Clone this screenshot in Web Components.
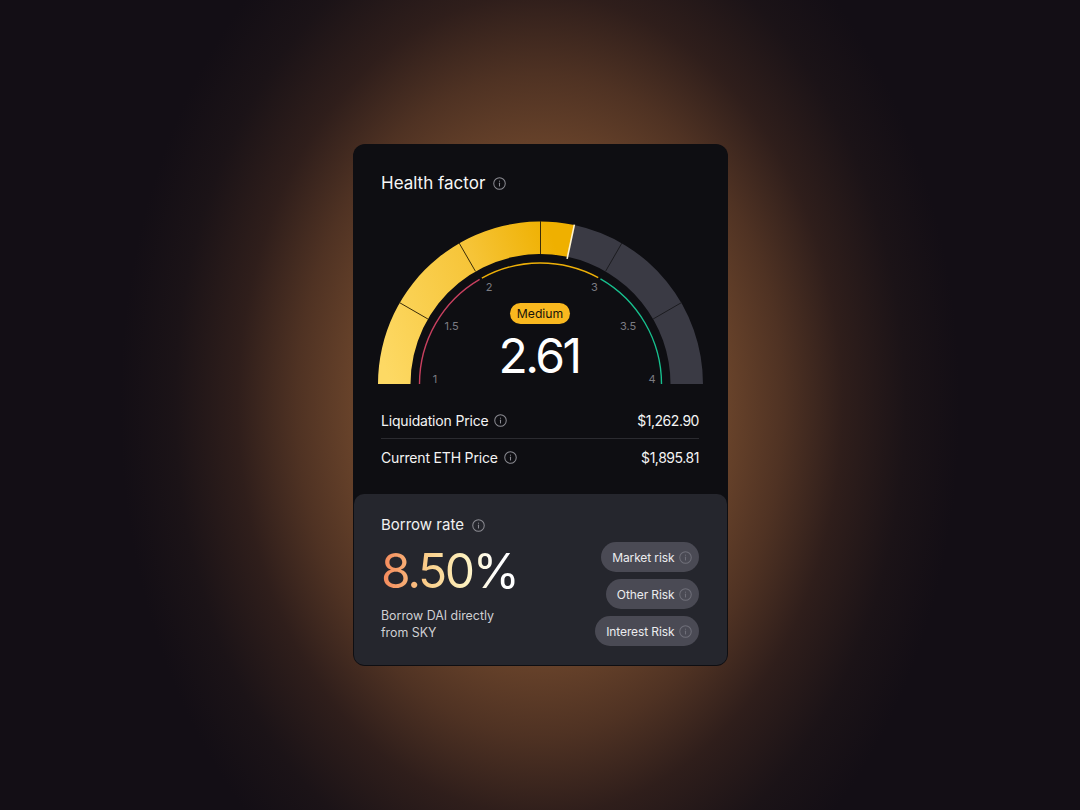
<!doctype html>
<html lang="en">
<head>
<meta charset="utf-8">
<title>Health factor</title>
<style>
  html, body { margin: 0; height: 100%; }
  body {
    display: flex; align-items: center; justify-content: center;
    height: 810px; overflow: hidden;
    background:
      radial-gradient(ellipse 420px 570px at 540px 405px, #74492b 0%, #67422a 45%, #4f3223 58%, #2f1e1b 72%, #1b1317 87%, #130e15 100%),
      #130e15;
    font-family: Inter, "Liberation Sans", sans-serif;
    color: #fff;
  }
</style>
</head>
<body>
<hf-card>
  <hf-gauge slot="gauge" value="2.61" level="Medium"></hf-gauge>
  <hf-row slot="rows" label="Liquidation Price" value="$1,262.90"></hf-row>
  <hf-row slot="rows" label="Current ETH Price" value="$1,895.81"></hf-row>
  <hf-borrow slot="borrow" rate="8.50%">
    Borrow DAI directly<br>from SKY
    <hf-chip slot="chips">Market risk</hf-chip>
    <hf-chip slot="chips">Other Risk</hf-chip>
    <hf-chip slot="chips">Interest Risk</hf-chip>
  </hf-borrow>
</hf-card>
<script>
class HfInfo extends HTMLElement {
  constructor() {
    super();
    this.attachShadow({ mode: "open" }).innerHTML = `
      <style>
        :host { display: inline-flex; width: 13px; height: 13px; color: #8b8b92; flex: none; }
        svg { width: 100%; height: 100%; display: block; }
      </style>
      <svg viewBox="0 0 14 14" fill="none" stroke="currentColor" stroke-width="1.1" stroke-linecap="round">
        <circle cx="7" cy="7" r="6.2"/>
        <path d="M7 6.6v3"/>
        <path d="M7 4.4v.1"/>
      </svg>`;
  }
}

class HfCard extends HTMLElement {
  constructor() {
    super();
    this.attachShadow({ mode: "open" }).innerHTML = `
      <style>
        :host { display: block; width: 375px; height: 522px; background: #0e0e12; border-radius: 12px; overflow: hidden; }
        .top { padding: 29px 28px 0 28.5px; height: 350px; box-sizing: border-box; }
        h2 { margin: 0; display: flex; align-items: center; gap: 8px; font-size: 17px; font-weight: 400; line-height: 20px; color: #f6f6f6; }
        .gauge { margin: 28px 0 0 -3.5px; }
        .rows { margin-top: 11px; }
        .rows ::slotted(hf-row:first-of-type) { border-bottom: 1px solid #2b2b30; }
      </style>
      <div class="top">
        <h2>Health factor <hf-info></hf-info></h2>
        <div class="gauge"><slot name="gauge"></slot></div>
        <div class="rows"><slot name="rows"></slot></div>
      </div>
      <slot name="borrow"></slot>`;
  }
}

class HfGauge extends HTMLElement {
  arc(r0, r1, a0, a1) {
    // angles in degrees, 180 = left end, 0 = right end
    const p = (r, a) => {
      const t = a * Math.PI / 180;
      return (this.cx + r * Math.cos(t)).toFixed(2) + " " + (this.cy - r * Math.sin(t)).toFixed(2);
    };
    return `M${p(r1, a0)}A${r1} ${r1} 0 0 1 ${p(r1, a1)}L${p(r0, a1)}A${r0} ${r0} 0 0 0 ${p(r0, a0)}Z`;
  }
  line(r, a0, a1) {
    const p = (a) => {
      const t = a * Math.PI / 180;
      return (this.cx + r * Math.cos(t)).toFixed(2) + " " + (this.cy - r * Math.sin(t)).toFixed(2);
    };
    return `M${p(a0)}A${r} ${r} 0 0 1 ${p(a1)}`;
  }
  connectedCallback() {
    this.cx = 162.5; this.cy = 163;
    const end = 78;
    const tick = (a) => {
      const t = a * Math.PI / 180;
      const c = Math.cos(t), s = Math.sin(t);
      return `<line x1="${this.cx + 130 * c}" y1="${this.cy - 130 * s}" x2="${this.cx + 163 * c}" y2="${this.cy - 163 * s}"/>`;
    };
    const t = end * Math.PI / 180;
    const labels = [["1", 57, 162], ["1.5", 73.5, 109], ["2", 111, 70], ["3", 216.5, 70], ["3.5", 250, 109], ["4", 274, 162]]
      .map(([s, x, y]) => `<text x="${x}" y="${y}" text-anchor="middle">${s}</text>`).join("");
    this.attachShadow({ mode: "open" }).innerHTML = `
      <style>
        :host { display: block; position: relative; width: 325px; height: 170px; }
        svg { display: block; }
        text { font: 400 11px Inter, "Liberation Sans", sans-serif; fill: #7c7c82; }
        .mid { position: absolute; left: 0; right: 0; top: 82px; display: flex; flex-direction: column; align-items: center; }
        .level { background: #f9b81f; color: #17130a; border-radius: 11px; font-size: 12.2px; line-height: 21px; padding: 0 7px; }
        .value { font-size: 48px; line-height: 50px; font-weight: 400; margin: 7px 0 0 -2px; color: #fff; letter-spacing: -2.5px; }
      </style>
      <svg width="325" height="170" viewBox="0 0 325 170">
        <defs>
          <linearGradient id="fill" gradientUnits="userSpaceOnUse" x1="0" y1="130" x2="190" y2="60">
            <stop offset="0" stop-color="#fdd964"/>
            <stop offset=".6" stop-color="#f6c437"/>
            <stop offset="1" stop-color="#efb000"/>
          </linearGradient>
        </defs>
        <path d="${this.arc(130, 162.5, end, 0)}" fill="#3a3a44"/>
        <path d="${this.arc(130, 162.5, 180, end)}" fill="url(#fill)"/>
        <g stroke="#3a2c08" stroke-width="1">${[150, 120, 90].map(tick).join("")}</g>
        <g stroke="#1c1c20" stroke-width="1">${[60, 30].map(tick).join("")}</g>
        <line x1="${this.cx + 128 * Math.cos(t)}" y1="${this.cy - 128 * Math.sin(t)}" x2="${this.cx + 163 * Math.cos(t)}" y2="${this.cy - 163 * Math.sin(t)}" stroke="#fff4d0" stroke-width="1.6"/>
        <g fill="none" stroke-width="1.4">
          <path d="${this.line(121, 180, 120.2)}" stroke="#c8405f"/>
          <path d="${this.line(121, 119, 61.5)}" stroke="#eeb008"/>
          <path d="${this.line(121, 60.3, 0)}" stroke="#17c08e"/>
        </g>
        ${labels}
      </svg>
      <div class="mid">
        <span class="level">${this.getAttribute("level")}</span>
        <span class="value">${this.getAttribute("value")}</span>
      </div>`;
  }
}

class HfRow extends HTMLElement {
  connectedCallback() {
    this.attachShadow({ mode: "open" }).innerHTML = `
      <style>
        :host { display: flex; justify-content: space-between; align-items: center; height: 37px; margin-right: .5px; font-size: 14px; color: #f4f4f4; box-sizing: border-box; }
        .l { display: flex; align-items: center; gap: 6px; letter-spacing: -.18px; }
        .v { letter-spacing: -.45px; }
      </style>
      <span class="l">${this.getAttribute("label")} <hf-info></hf-info></span>
      <span class="v">${this.getAttribute("value")}</span>`;
  }
}

class HfChip extends HTMLElement {
  constructor() {
    super();
    this.attachShadow({ mode: "open" }).innerHTML = `
      <style>
        :host { display: inline-flex; align-items: center; gap: 4px; height: 30px; padding: 0 7px 0 11px; border-radius: 15px; background: #4a4a54; font-size: 12px; letter-spacing: -.1px; color: #ececee; box-sizing: border-box; }
        hf-info { color: #6f6f79; }
      </style>
      <slot></slot><hf-info></hf-info>`;
  }
}

class HfBorrow extends HTMLElement {
  connectedCallback() {
    this.attachShadow({ mode: "open" }).innerHTML = `
      <style>
        :host { display: block; height: 171px; margin: 0 1px; box-sizing: border-box; padding: 21px 28px 0 27.5px; background: #25262d; border-radius: 10px; }
        h3 { margin: 0; display: flex; align-items: center; gap: 8px; font-size: 15px; font-weight: 400; line-height: 20px; color: #f1f1f1; }
        .body { display: flex; justify-content: space-between; }
        .rate { font-size: 48px; line-height: 58px; margin-top: 7px; letter-spacing: -2.4px; background: linear-gradient(90deg, #f5875a 0%, #fbd08c 35%, #fdf0bd 62%, #fff 85%); -webkit-background-clip: text; background-clip: text; color: transparent; }
        .note { font-size: 12.4px; line-height: 17px; color: #cfcfd3; margin-top: 7px; }
        .chips { display: flex; flex-direction: column; align-items: flex-end; gap: 7px; margin-top: 7px; }
      </style>
      <h3>Borrow rate <hf-info></hf-info></h3>
      <div class="body">
        <div>
          <div class="rate">${this.getAttribute("rate")}</div>
          <div class="note"><slot></slot></div>
        </div>
        <div class="chips"><slot name="chips"></slot></div>
      </div>`;
  }
}

customElements.define("hf-info", HfInfo);
customElements.define("hf-card", HfCard);
customElements.define("hf-gauge", HfGauge);
customElements.define("hf-row", HfRow);
customElements.define("hf-chip", HfChip);
customElements.define("hf-borrow", HfBorrow);
</script>
</body>
</html>
